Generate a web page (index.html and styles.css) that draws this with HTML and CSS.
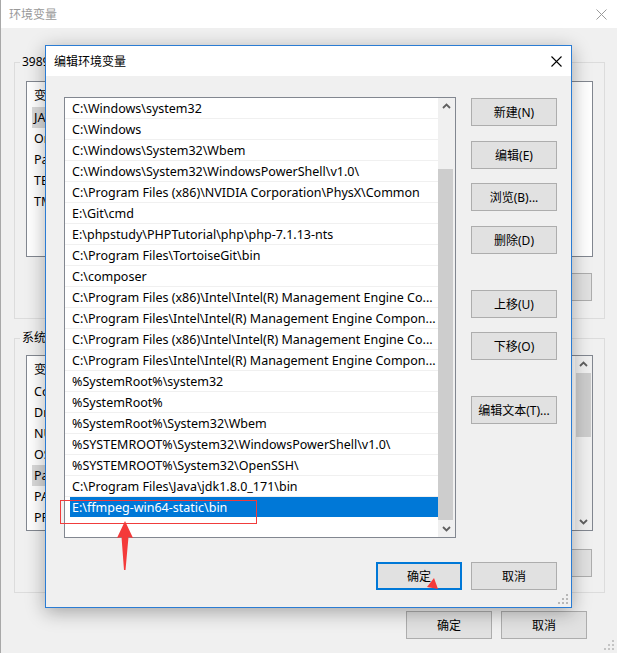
FILE: index.html
```html
<!DOCTYPE html>
<html lang="zh-CN">
<head>
<meta charset="utf-8">
<title>环境变量</title>
<link rel="stylesheet" href="styles.css">
</head>
<body>
<div class="win">
  <div class="win-title">
    <span class="win-title-text">环境变量</span>
    <svg class="win-close" width="11" height="11" viewBox="0 0 11 11"><path d="M0.5 0.5L10.5 10.5M10.5 0.5L0.5 10.5" stroke="#9a9a9a" stroke-width="1" fill="none"/></svg>
  </div>
  <div class="win-body">
    <fieldset class="group g1">
      <legend>398959 的用户变量(U)</legend>
      <div class="lv">
        <div class="lv-main">
          <div class="lv-head"><span class="c1">变量</span><span>值</span></div>
          <div class="lv-row hl"><span class="c1">JAVA_HOME</span><span>C:\Program Files\Java\jdk1.8.0_171</span></div>
          <div class="lv-row"><span class="c1">OneDrive</span><span>C:\Users\398959\OneDrive</span></div>
          <div class="lv-row"><span class="c1">Path</span><span>C:\Users\398959\AppData\Local\Microsoft\WindowsApps;</span></div>
          <div class="lv-row"><span class="c1">TEMP</span><span>C:\Users\398959\AppData\Local\Temp</span></div>
          <div class="lv-row"><span class="c1">TMP</span><span>C:\Users\398959\AppData\Local\Temp</span></div>
        </div>
      </div>
      <div class="grp-btns">
        <button class="btn">新建(N)...</button>
        <button class="btn">编辑(E)...</button>
        <button class="btn">删除(D)</button>
      </div>
    </fieldset>
    <fieldset class="group g2">
      <legend>系统变量(S)</legend>
      <div class="lv">
        <div class="lv-main">
          <div class="lv-head"><span class="c1">变量</span><span>值</span></div>
          <div class="lv-row"><span class="c1">ComSpec</span><span>C:\Windows\system32\cmd.exe</span></div>
          <div class="lv-row"><span class="c1">DriverData</span><span>C:\Windows\System32\Drivers\DriverData</span></div>
          <div class="lv-row"><span class="c1">NUMBER_OF_PROCESSORS</span><span>4</span></div>
          <div class="lv-row"><span class="c1">OS</span><span>Windows_NT</span></div>
          <div class="lv-row hl"><span class="c1">Path</span><span>C:\Windows\system32;C:\Windows;</span></div>
          <div class="lv-row"><span class="c1">PATHEXT</span><span>.COM;.EXE;.BAT;.CMD;.VBS</span></div>
          <div class="lv-row"><span class="c1">PROCESSOR_ARCHITECTURE</span><span>AMD64</span></div>
        </div>
        <div class="sb sb-bg">
          <div class="sb-btn"><svg width="17" height="17" viewBox="0 0 17 17"><path d="M5 10L8.5 6.5L12 10" stroke="#606060" stroke-width="1.8" fill="none"/></svg></div>
          <div class="sb-thumb-bg"></div>
          <div class="sb-fill"></div>
          <div class="sb-btn"><svg width="17" height="17" viewBox="0 0 17 17"><path d="M5 7L8.5 10.5L12 7" stroke="#606060" stroke-width="1.8" fill="none"/></svg></div>
        </div>
      </div>
      <div class="grp-btns">
        <button class="btn">新建(W)...</button>
        <button class="btn">编辑(I)...</button>
        <button class="btn">删除(L)</button>
      </div>
    </fieldset>
    <div class="win-foot">
      <button class="btn">确定</button>
      <button class="btn">取消</button>
    </div>
  </div>
  <svg class="grip grip-win" width="10" height="10" viewBox="0 0 10 10"><g fill="#c4c4c4"><rect x="8" y="0" width="2" height="2"/><rect x="4" y="4" width="2" height="2"/><rect x="8" y="4" width="2" height="2"/><rect x="0" y="8" width="2" height="2"/><rect x="4" y="8" width="2" height="2"/><rect x="8" y="8" width="2" height="2"/></g></svg>
</div>

<div class="dlg">
  <div class="dlg-title">
    <span>编辑环境变量</span>
    <svg width="11" height="11" viewBox="0 0 11 11"><path d="M0.5 0.5L10.5 10.5M10.5 0.5L0.5 10.5" stroke="#000" stroke-width="1.1" fill="none"/></svg>
  </div>
  <div class="dlg-body">
    <div class="dlg-main">
      <div class="plist">
        <div class="plist-rows">
          <div class="prow"><span class="t">C:\Windows\system32</span></div>
          <div class="prow"><span class="t">C:\Windows</span></div>
          <div class="prow"><span class="t">C:\Windows\System32\Wbem</span></div>
          <div class="prow"><span class="t">C:\Windows\System32\WindowsPowerShell\v1.0\</span></div>
          <div class="prow"><span class="t">C:\Program Files (x86)\NVIDIA Corporation\PhysX\Common</span></div>
          <div class="prow"><span class="t">E:\Git\cmd</span></div>
          <div class="prow"><span class="t">E:\phpstudy\PHPTutorial\php\php-7.1.13-nts</span></div>
          <div class="prow"><span class="t">C:\Program Files\TortoiseGit\bin</span></div>
          <div class="prow"><span class="t">C:\composer</span></div>
          <div class="prow"><span class="t">C:\Program Files (x86)\Intel\Intel(R) Management Engine Co...</span></div>
          <div class="prow"><span class="t">C:\Program Files\Intel\Intel(R) Management Engine Compon...</span></div>
          <div class="prow"><span class="t">C:\Program Files (x86)\Intel\Intel(R) Management Engine Co...</span></div>
          <div class="prow"><span class="t">C:\Program Files\Intel\Intel(R) Management Engine Compon...</span></div>
          <div class="prow"><span class="t">%SystemRoot%\system32</span></div>
          <div class="prow"><span class="t">%SystemRoot%</span></div>
          <div class="prow"><span class="t">%SystemRoot%\System32\Wbem</span></div>
          <div class="prow"><span class="t">%SYSTEMROOT%\System32\WindowsPowerShell\v1.0\</span></div>
          <div class="prow"><span class="t">%SYSTEMROOT%\System32\OpenSSH\</span></div>
          <div class="prow"><span class="t">C:\Program Files\Java\jdk1.8.0_171\bin</span></div>
          <div class="prow sel"><span class="t">E:\ffmpeg-win64-static\bin</span></div>
        </div>
        <div class="sb">
          <div class="sb-btn"><svg width="17" height="17" viewBox="0 0 17 17"><path d="M5 10L8.5 6.5L12 10" stroke="#606060" stroke-width="1.8" fill="none"/></svg></div>
          <div class="sb-track"></div>
          <div class="sb-thumb"></div>
          <div class="sb-btn"><svg width="17" height="17" viewBox="0 0 17 17"><path d="M5 7L8.5 10.5L12 7" stroke="#606060" stroke-width="1.8" fill="none"/></svg></div>
        </div>
      </div>
      <div class="dlg-btns">
        <button class="btn">新建(N)</button>
        <button class="btn">编辑(E)</button>
        <button class="btn">浏览(B)...</button>
        <button class="btn">删除(D)</button>
        <button class="btn sep">上移(U)</button>
        <button class="btn">下移(O)</button>
        <button class="btn sep">编辑文本(T)...</button>
      </div>
    </div>
    <div class="dlg-foot">
      <button class="btn default">确定</button>
      <button class="btn">取消</button>
    </div>
  </div>
  <svg class="grip grip-dlg" width="10" height="10" viewBox="0 0 10 10"><g fill="#b8b8b8"><rect x="8" y="0" width="2" height="2"/><rect x="4" y="4" width="2" height="2"/><rect x="8" y="4" width="2" height="2"/><rect x="0" y="8" width="2" height="2"/><rect x="4" y="8" width="2" height="2"/><rect x="8" y="8" width="2" height="2"/></g></svg>
</div>

<div class="mark-box"></div>
<svg class="mark-arrow" width="20" height="52" viewBox="0 0 20 52"><polygon points="9,0 17,17 12.5,16 9.5,49 8,49 5.5,16 1,17" fill="#f43a3a"/></svg>
<svg class="mark-tri" width="12" height="12" viewBox="0 0 12 12"><polygon points="7,0 0,9 11,11" fill="#f43a3a"/></svg>
</body>
</html>
```

FILE: styles.css
```css
html, body {
  margin: 0;
  padding: 0;
}
body {
  width: 617px;
  height: 653px;
  overflow: hidden;
  position: relative;
  background: #f0f0f0;
  font-family: "Noto Sans", "Noto Sans CJK SC", sans-serif;
  font-size: 12px;
  color: #000;
}
.win {
  position: relative;
  height: 653px;
  box-sizing: border-box;
  border-left: 1px solid #a8a8a8;
  display: flex;
  flex-direction: column;
}
.win-title {
  height: 28px;
  flex: none;
  background: #fff;
  display: flex;
  align-items: center;
  justify-content: space-between;
  padding: 0 10px 0 8px;
  color: #999;
  font-size: 12px;
}
.win-body {
  flex: 1;
  background: #f0f0f0;
  padding-top: 26px;
  display: flex;
  flex-direction: column;
}
.group {
  margin: 0 12px 0 13px;
  border: 1px solid #dcdcdc;
  padding: 11px 11px 17px 11px;
  min-width: 0;
}
.group legend {
  line-height: 16px;
  padding: 0 2px;
  margin-left: -6px;
}
.g2 {
  margin-top: 11px;
  padding-top: 9px;
  padding-bottom: 15px;
}
.lv {
  height: 176px;
  box-sizing: border-box;
  border: 1px solid #828790;
  background: #fff;
  display: flex;
  overflow: hidden;
}
.lv-main {
  flex: 1;
  overflow: hidden;
  font-size: 12.5px;
}
.lv-head {
  height: 25px;
  display: flex;
  align-items: center;
  padding-left: 7px;
  white-space: nowrap;
}
.lv-row {
  height: 21px;
  display: flex;
  align-items: center;
  margin-left: 5px;
  white-space: nowrap;
}
.lv-row .c1 {
  padding-left: 2px;
  line-height: 21px;
}
.lv-row.hl .c1 {
  background: #d9d9d9;
}
.c1 {
  width: 170px;
  flex: none;
}
.grp-btns {
  display: flex;
  justify-content: flex-end;
  gap: 9px;
  margin-top: 16px;
  padding-right: 1px;
}
.g2 .grp-btns {
  margin-top: 18px;
}
.btn {
  width: 86px;
  height: 28px;
  box-sizing: border-box;
  background: #e1e1e1;
  border: 1px solid #adadad;
  font-family: "Noto Sans", "Noto Sans CJK SC", sans-serif;
  font-size: 12px;
  color: #000;
  padding: 0;
  margin: 0;
}
.btn.default {
  border: 2px solid #0078d7;
}
.win-foot {
  display: flex;
  justify-content: flex-end;
  gap: 9px;
  margin-top: 18px;
  padding-right: 30px;
}
.grip {
  position: absolute;
  display: block;
}
.grip-win {
  right: 3px;
  bottom: 3px;
}
.grip-dlg {
  right: 3px;
  bottom: 3px;
}
.sb {
  width: 17px;
  flex: none;
  background: #f0f0f0;
  display: flex;
  flex-direction: column;
}
.sb-btn {
  height: 17px;
  flex: none;
}
.sb-btn svg {
  display: block;
}
.sb-track {
  height: 54px;
  flex: none;
}
.sb-thumb {
  flex: 1;
  background: #cdcdcd;
  margin-right: 2px;
}
.sb-thumb-bg {
  height: 64px;
  flex: none;
  background: #cdcdcd;
  margin: 0 1px;
}
.sb-fill {
  flex: 1;
}

/* dialog */
.dlg {
  position: absolute;
  left: 45px;
  top: 45px;
  width: 527px;
  height: 563px;
  box-sizing: border-box;
  border: 1px solid #2b7cd3;
  background: #f0f0f0;
  box-shadow: 0 4px 18px rgba(0, 0, 0, 0.32);
  display: flex;
  flex-direction: column;
}
.dlg-title {
  height: 30px;
  flex: none;
  background: #fff;
  display: flex;
  align-items: center;
  justify-content: space-between;
  padding: 0 9px 0 8px;
}
.dlg-title svg {
  display: block;
}
.dlg-body {
  padding: 21px 14px 17px 18px;
  display: flex;
  flex-direction: column;
}
.dlg-main {
  display: flex;
  height: 441px;
}
.plist {
  width: 392px;
  height: 441px;
  box-sizing: border-box;
  border: 1px solid #828790;
  background: #fff;
  display: flex;
}
.plist-rows {
  flex: 1;
  overflow: hidden;
  font-size: 12.5px;
}
.prow {
  height: 21px;
  box-sizing: border-box;
  border-bottom: 1px solid #f0f0f0;
  padding: 0 0 0 5px;
  display: flex;
}
.prow .t {
  flex: 1;
  padding-left: 2px;
  height: 20px;
  line-height: 22px;
  white-space: nowrap;
  overflow: hidden;
}
.prow.sel {
  border-bottom-color: #fff;
}
.prow.sel .t {
  background: #0078d7;
  color: #fff;
}
.dlg-btns {
  margin-left: 15px;
  display: flex;
  flex-direction: column;
  gap: 14.5px;
  padding-top: 1px;
}
.dlg-btns .sep {
  margin-top: 21.5px;
}
.dlg-foot {
  display: flex;
  justify-content: flex-end;
  gap: 9px;
  margin-top: 24px;
}

/* red annotations */
.mark-box {
  position: absolute;
  left: 60px;
  top: 500px;
  width: 195px;
  height: 22px;
  border: 1px solid #f03c3c;
}
.mark-arrow {
  position: absolute;
  left: 116px;
  top: 521px;
}
.mark-tri {
  position: absolute;
  left: 427px;
  top: 578px;
}
```
